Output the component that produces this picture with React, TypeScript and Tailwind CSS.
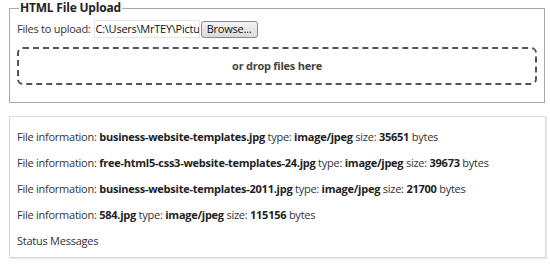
import React from 'react';

type FileInfo = { name: string; type: string; size: number };

const files: FileInfo[] = [
  { name: 'business-website-templates.jpg', type: 'image/jpeg', size: 35651 },
  { name: 'free-html5-css3-website-templates-24.jpg', type: 'image/jpeg', size: 39673 },
  { name: 'business-website-templates-2011.jpg', type: 'image/jpeg', size: 21700 },
  { name: '584.jpg', type: 'image/jpeg', size: 115156 },
];

const App: React.FC = () => {
  return (
    <div className="w-[550px] h-[267px] bg-white text-[11px] tracking-[-0.25px] text-[#333] font-['Open_Sans',sans-serif]">
      {/* upload form */}
      <fieldset className="ml-[9px] w-[536px] border border-[#a8a8a8] px-[7px] pb-[17px]">
        <legend className="ml-[2px] px-[1px] text-[12px] tracking-[-0.2px] leading-[16px] font-bold text-[#222]">HTML File Upload</legend>
        <div className="flex items-center h-[20px] mt-[3px]">
          <span className="mr-[3px]">Files to upload:</span>
          <div className="w-[106px] h-[18px] border border-[#e6e6e6] px-[1px] leading-[16px] overflow-hidden whitespace-nowrap text-[#111]">
            C:\Users\MrTEY\Pictu
          </div>
          <button className="ml-[1px] h-[17px] w-[57px] rounded-[3px] border border-[#8a8a8a] bg-gradient-to-b from-[#f4f4f4] to-[#dadada] text-[11px] leading-[14px] text-[#111] whitespace-nowrap">
            Browse...
          </button>
        </div>
        <div className="mt-[8px] h-[38px] rounded-[6px] border-2 border-dashed border-[#555] flex items-center justify-center font-bold text-[#444]">
          or drop files here
        </div>
      </fieldset>

      {/* messages */}
      <div className="ml-[9px] mt-[13px] w-[537px] h-[142px] border border-[#d8d8d8] shadow-[1px_1px_1px_rgba(0,0,0,0.08)] px-[7px] pt-[7px]">
        {files.map((f) => (
          <p key={f.name} className="leading-[26px] whitespace-nowrap">
            File information: <b className="text-[#222]">{f.name}</b> type: <b className="text-[#222]">{f.type}</b> size:{' '}
            <b className="text-[#222]">{f.size}</b> bytes
          </p>
        ))}
        <p className="leading-[26px]">Status Messages</p>
      </div>
    </div>
  );
};

export default App;
